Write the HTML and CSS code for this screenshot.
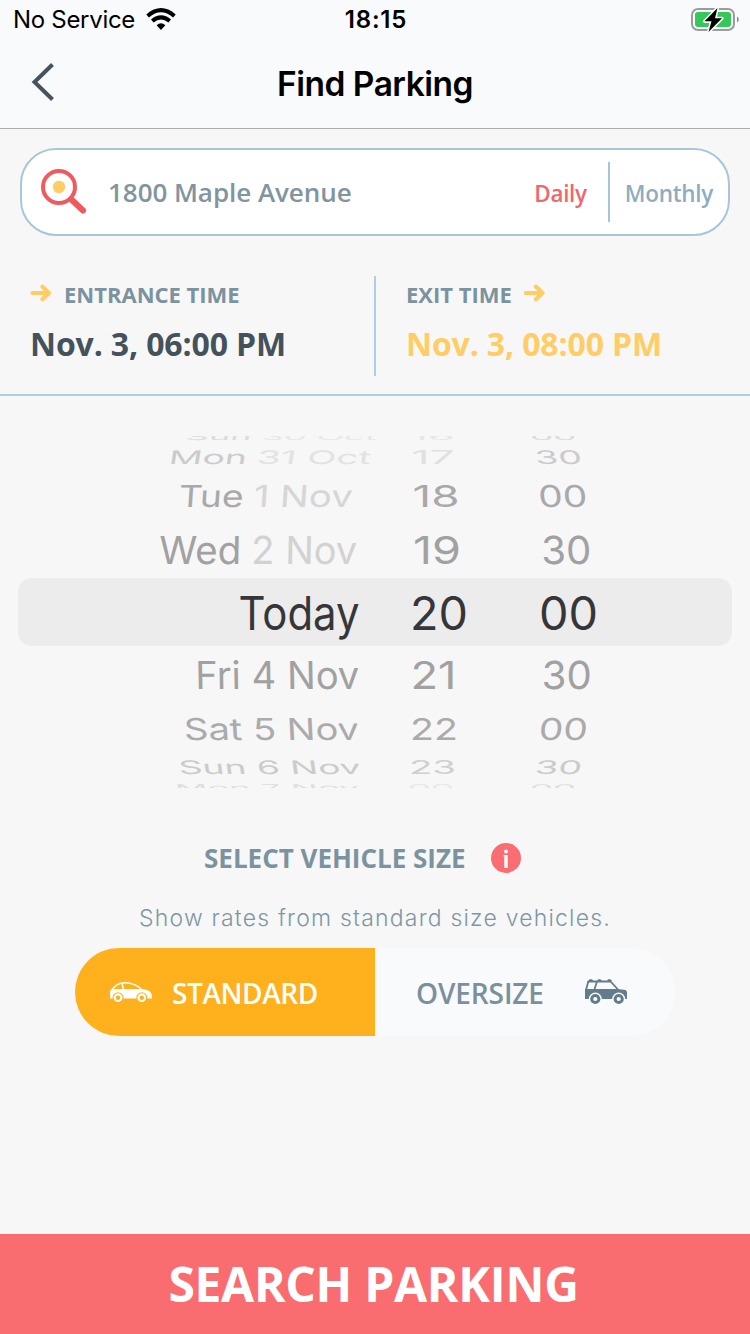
FILE: index.html
```html
<!DOCTYPE html>
<html lang="en">
<head>
<meta charset="utf-8">
<title>Find Parking</title>
<link rel="stylesheet" href="styles.css">
</head>
<body>
<div class="app">
  <header class="top">
    <div class="status">
      <div class="carrier"><span>No Service</span>
        <svg width="30" height="23" viewBox="0 0 30 23"><path d="M1.600 8Q15-3.600 28.400 8M6.300 13Q15 5.700 23.700 13" fill="none" stroke="#000" stroke-width="4"/><path d="M10.600 17.300Q15 13.400 19.400 17.300L15 22Z"/></svg>
      </div>
      <div class="clock">18:15</div>
      <svg class="battery" width="48" height="26" viewBox="0 0 48 26"><rect x="1" y="2" width="42" height="21" rx="6" fill="none" stroke="#9b9c9e" stroke-width="2"/><path d="M46 9.500Q47.800 10.500 47.800 12.500T46 15.500Z" fill="#8c8d8f"/><rect x="4" y="5" width="36" height="15" rx="3" fill="#35c759"/><path d="M26.500 1L13.500 14.300H20.500L17.500 25L31 11.300H24Z" fill="#000" stroke="#f8fafc" stroke-width="3.200" stroke-linejoin="round" paint-order="stroke"/></svg>
    </div>
    <div class="nav">
      <svg class="back" width="24" height="38" viewBox="0 0 24 38"><path d="M21.500 1.500L3.500 19L21.500 36.500" fill="none" stroke="#46535d" stroke-width="4"/></svg>
      <h1 class="title">Find Parking</h1>
    </div>
  </header>

  <div class="search">
    <svg class="lens" width="48" height="48" viewBox="0 0 48 48"><path d="M32 32L43 42.500" stroke="#ef5960" stroke-width="6" stroke-linecap="round"/><circle cx="19" cy="19" r="16" fill="#fff" stroke="#ef5960" stroke-width="4"/><circle cx="19" cy="19" r="6.200" fill="#ffcd66"/></svg>
    <span class="address">1800 Maple Avenue</span>
    <span class="daily">Daily</span>
    <span class="rule"></span>
    <span class="monthly">Monthly</span>
  </div>

  <section class="times">
    <div class="time">
      <div class="label"><svg class="arrow" width="22" height="18" viewBox="0 0 22 18"><path d="M2.500 9H19M12.500 2.700L19 9L12.500 15.300" fill="none" stroke="#ffcd66" stroke-width="4.200" stroke-linecap="round" stroke-linejoin="round"/></svg><span class="entrance">ENTRANCE TIME</span></div>
      <div class="value">Nov. 3, 06:00 PM</div>
    </div>
    <div class="time exit">
      <div class="label"><span class="exitlabel">EXIT TIME</span><svg class="arrow" width="22" height="18" viewBox="0 0 22 18"><path d="M2 9H18.500M12 2.700L18.500 9L12 15.300" fill="none" stroke="#ffcd66" stroke-width="4.200" stroke-linecap="round" stroke-linejoin="round"/></svg></div>
      <div class="value">Nov. 3, 08:00 PM</div>
    </div>
  </section>

  <svg class="picker" width="750" height="432" viewBox="0 396 750 432">
    <defs><clipPath id="drum"><rect x="0" y="436" width="750" height="352"/></clipPath></defs>
    <rect x="18" y="578" width="714" height="68" rx="14" fill="#ececed"/>
    <g class="wheel" clip-path="url(#drum)">
      <g transform="translate(0 440) skewX(-14) scale(1 .2)" fill="#dcdcdd"><text x="185" textLength="66" lengthAdjust="spacingAndGlyphs">Sun</text><text x="261" textLength="115" lengthAdjust="spacingAndGlyphs" fill="#e7e7e8">30 Oct</text></g>
      <g transform="translate(0 464) skewX(-9) scale(1 .4)" fill="#cbcbcc"><text x="168" textLength="78" lengthAdjust="spacingAndGlyphs">Mon</text><text x="256" textLength="114" lengthAdjust="spacingAndGlyphs" fill="#e2e2e3">31 Oct</text></g>
      <g transform="translate(0 506.500) skewX(-4) scale(1 .65)" fill="#a9a9aa"><text x="178" textLength="65" lengthAdjust="spacingAndGlyphs">Tue</text><text x="253" textLength="99" lengthAdjust="spacingAndGlyphs" fill="#d6d6d7">1 Nov</text></g>
      <g transform="translate(0 563.700) skewX(-1) scale(1 .83)" fill="#a1a1a2"><text x="159" textLength="82" lengthAdjust="spacingAndGlyphs">Wed</text><text x="251" textLength="106" lengthAdjust="spacingAndGlyphs" fill="#d2d2d3">2 Nov</text></g>
      <g transform="translate(0 629.700)" fill="#363638"><text x="238.500" textLength="121" lengthAdjust="spacingAndGlyphs">Today</text><text x="410" textLength="58" lengthAdjust="spacingAndGlyphs">20</text><text x="539" textLength="59" lengthAdjust="spacingAndGlyphs">00</text></g>
      <g transform="translate(0 689) skewX(1) scale(1 .83)" fill="#a1a1a2"><text x="195.500" textLength="164" lengthAdjust="spacingAndGlyphs">Fri 4 Nov</text></g>
      <g transform="translate(0 740.300) skewX(3) scale(1 .65)" fill="#ababac"><text x="184.500" textLength="175" lengthAdjust="spacingAndGlyphs">Sat 5 Nov</text></g>
      <g transform="translate(0 774.300) skewX(8) scale(1 .4)" fill="#cbcbcc"><text x="179.500" textLength="182" lengthAdjust="spacingAndGlyphs">Sun 6 Nov</text></g>
      <g transform="translate(0 790.500) skewX(14) scale(1 .2)" fill="#dededf"><text x="176" textLength="184" lengthAdjust="spacingAndGlyphs">Mon 7 Nov</text></g>

      <g transform="translate(0 440) scale(1 .2)" fill="#e6e6e7"><text x="410" textLength="45" lengthAdjust="spacingAndGlyphs">16</text></g>
      <g transform="translate(0 464) scale(1 .4)" fill="#e0e0e1"><text x="411.500" textLength="43" lengthAdjust="spacingAndGlyphs">17</text></g>
      <g transform="translate(0 506.500) scale(1 .65)" fill="#a9a9aa"><text x="412.500" textLength="47" lengthAdjust="spacingAndGlyphs">18</text></g>
      <g transform="translate(0 563.700) scale(1 .83)" fill="#a1a1a2"><text x="413" textLength="48" lengthAdjust="spacingAndGlyphs">19</text></g>
      <g transform="translate(0 689) scale(1 .83)" fill="#a1a1a2"><text x="410.500" textLength="46" lengthAdjust="spacingAndGlyphs">21</text></g>
      <g transform="translate(0 740.300) scale(1 .65)" fill="#ababac"><text x="410" textLength="48" lengthAdjust="spacingAndGlyphs">22</text></g>
      <g transform="translate(0 774.300) scale(1 .4)" fill="#cfcfd0"><text x="409" textLength="47" lengthAdjust="spacingAndGlyphs">23</text></g>
      <g transform="translate(0 790.500) scale(1 .2)" fill="#e8e8e9"><text x="408" textLength="46" lengthAdjust="spacingAndGlyphs">00</text></g>

      <g transform="translate(0 440) skewX(14) scale(1 .2)" fill="#dcdcdd"><text x="531" textLength="46" lengthAdjust="spacingAndGlyphs">00</text></g>
      <g transform="translate(0 464) skewX(9) scale(1 .4)" fill="#cbcbcc"><text x="536" textLength="47" lengthAdjust="spacingAndGlyphs">30</text></g>
      <g transform="translate(0 506.500) skewX(4) scale(1 .65)" fill="#a9a9aa"><text x="539" textLength="49" lengthAdjust="spacingAndGlyphs">00</text></g>
      <g transform="translate(0 563.700) skewX(1) scale(1 .83)" fill="#a1a1a2"><text x="541.500" textLength="50" lengthAdjust="spacingAndGlyphs">30</text></g>
      <g transform="translate(0 689) skewX(-1) scale(1 .83)" fill="#a1a1a2"><text x="541.500" textLength="50" lengthAdjust="spacingAndGlyphs">30</text></g>
      <g transform="translate(0 740.300) skewX(-5) scale(1 .65)" fill="#ababac"><text x="538" textLength="49" lengthAdjust="spacingAndGlyphs">00</text></g>
      <g transform="translate(0 774.300) skewX(-10) scale(1 .4)" fill="#cbcbcc"><text x="534" textLength="47" lengthAdjust="spacingAndGlyphs">30</text></g>
      <g transform="translate(0 790.500) skewX(-14) scale(1 .2)" fill="#dededf"><text x="529" textLength="46" lengthAdjust="spacingAndGlyphs">00</text></g>
    </g>
  </svg>

  <section class="vehicle">
    <div class="heading"><h2 class="size">SELECT VEHICLE SIZE</h2>
      <svg width="30" height="30" viewBox="0 0 30 30"><circle cx="15" cy="15" r="15" fill="#fa6d72"/><circle cx="15" cy="8.500" r="2" fill="#fff"/><path d="M12.500 12H16.700V25H13.300V13.500H12.500Z" fill="#fff"/></svg>
    </div>
    <p class="hint">Show rates from standard size vehicles.</p>
    <div class="toggle">
      <div class="option standard">
        <svg width="42" height="21" viewBox="0 0 42 21"><path d="M0 9L4 7H32Q42 8 42 14V16.500H0Z" fill="#fff"/><path d="M.8 9.500Q6 .8 15 .8Q25 .8 33 8.500M12 1L13.500 8" fill="none" stroke="#fff" stroke-width="1.500"/><g fill="#ffb01d"><circle cx="8" cy="15.700" r="5.500"/><circle cx="31.800" cy="15.700" r="5.500"/></g><g fill="none" stroke="#fff" stroke-width="2.200"><circle cx="8" cy="15.700" r="3.300"/><circle cx="31.800" cy="15.700" r="3.300"/></g></svg>
        <span class="stdlabel">STANDARD</span>
      </div>
      <div class="option oversize">
        <span class="overlabel">OVERSIZE</span>
        <svg width="42" height="26" viewBox="0 0 42 26"><path d="M0 10H33L40.500 11L42 12.500V20H0Z" fill="#637c8b"/><path d="M1 11L3.300 2.500H25.500L33 10.500M12 2.500L9.300 11" fill="none" stroke="#637c8b" stroke-width="1.800"/><path d="M3.500 2L4.500.3H7L8.500 2ZM12 2L13.200.3H15.500L17 2ZM22 2L23.200.3H25.500L27 2Z" fill="#637c8b"/><g fill="#f8fafc"><circle cx="10.300" cy="20" r="6.500"/><circle cx="33.700" cy="20" r="6.500"/></g><g fill="none" stroke="#637c8b" stroke-width="3"><circle cx="10.300" cy="20" r="3.600"/><circle cx="33.700" cy="20" r="3.600"/></g></svg>
      </div>
    </div>
  </section>

  <button class="submit">SEARCH PARKING</button>
</div>
</body>
</html>
```

FILE: styles.css
```css
* { box-sizing: border-box; }
body { margin: 0; background: #f7f7f7; font-family: "Open Sans", sans-serif; }
svg { display: block; flex: none; }
h1, h2, p { margin: 0; }
span, h1, h2 { white-space: nowrap; }

.app { width: 750px; height: 1334px; display: flex; flex-direction: column; background: #f7f7f7; }

.top { height: 129px; flex: none; background: #f8fafc; border-bottom: 1px solid #aaacae; font-family: Inter, sans-serif; color: #000; }
.status { height: 40px; display: grid; grid-template-columns: 1fr auto 1fr; align-items: center; padding: 0 11px 0 13px; }
.status > * { margin-top: -1px; }
.carrier { display: flex; align-items: center; gap: 11px; font-size: 24px; line-height: 40px; letter-spacing: -.3px; }
.carrier span { padding-top: 1px; }
.clock { font-size: 24px; font-weight: 600; line-height: 40px; letter-spacing: .8px; padding-top: 1px; }
.nav { height: 88px; display: grid; grid-template-columns: 1fr auto 1fr; align-items: center; padding: 0 31px; }
.battery { justify-self: end; }
.back { margin-top: -5px; }
.title { font-size: 33.5px; line-height: 88px; font-weight: 600; letter-spacing: -.5px; }

.search { height: 88px; flex: none; margin: 19px 20px 0; padding: 0 15px 0 18px; display: flex; align-items: center; background: #fff; border: 2px solid #a9c6d8; border-radius: 36px; }
.lens { margin-right: 20px; }
.address { font-size: 26px; font-weight: 600; letter-spacing: -.05px; color: #8195a1; flex: 1; }
.daily { font-size: 22.5px; font-weight: 600; letter-spacing: -.3px; color: #f1666c; padding-top: 2px; }
.rule { width: 2px; height: 60px; background: #a5c5d8; margin: 0 15px 0 21px; }
.monthly { font-size: 22.5px; font-weight: 600; letter-spacing: -.3px; color: #8fadbf; padding-top: 2px; }

.times { height: 160px; flex: none; display: flex; padding: 40px 0 18px; border-bottom: 2px solid #acd0e3; }
.time { width: 376px; height: 100px; padding-left: 30px; border-right: 2px solid #acd0e3; }
.exit { width: 374px; border: 0; }
.label { height: 36px; display: flex; align-items: center; gap: 12px; font-size: 22px; font-weight: 700; color: #7b939f; }
.arrow { margin-top: -2px; }
.value { font-size: 32px; line-height: 64px; font-weight: 700; letter-spacing: -.13px; color: #44525c; white-space: nowrap; }
.exit .value { color: #ffcd66; }

.picker { width: 750px; height: 432px; }
.wheel { font-family: Inter, sans-serif; font-size: 46.5px; }
.wheel text { white-space: pre; }

.vehicle { padding: 0 75px; flex: 1; }
.heading { height: 60px; display: flex; align-items: center; gap: 25px; padding-left: 129px; }
.size { font-size: 26px; font-weight: 700; color: #7b939f; }
.hint { height: 60px; line-height: 60px; font-family: Inter, sans-serif; font-weight: 300; font-size: 23px; text-align: center; letter-spacing: 1.2px; color: #7e97a6; white-space: nowrap; }
.toggle { height: 88px; display: flex; border-radius: 44px; overflow: hidden; background: #f8fafc; }
.option { width: 300px; display: flex; align-items: center; font-size: 28px; font-weight: 600; }
.option span { padding-top: 1px; }
.standard { background: #ffb01d; color: #fff; padding-left: 35px; gap: 20px; letter-spacing: -.4px; }
.oversize { color: #7b909d; padding-left: 41px; gap: 41px; letter-spacing: -.1px; }

.submit { height: 100px; flex: none; border: 0; padding: 0 3px 0 0; background: #f96d70; color: #fff; font: 700 48px/100px "Open Sans", sans-serif; letter-spacing: -.3px; }
```
